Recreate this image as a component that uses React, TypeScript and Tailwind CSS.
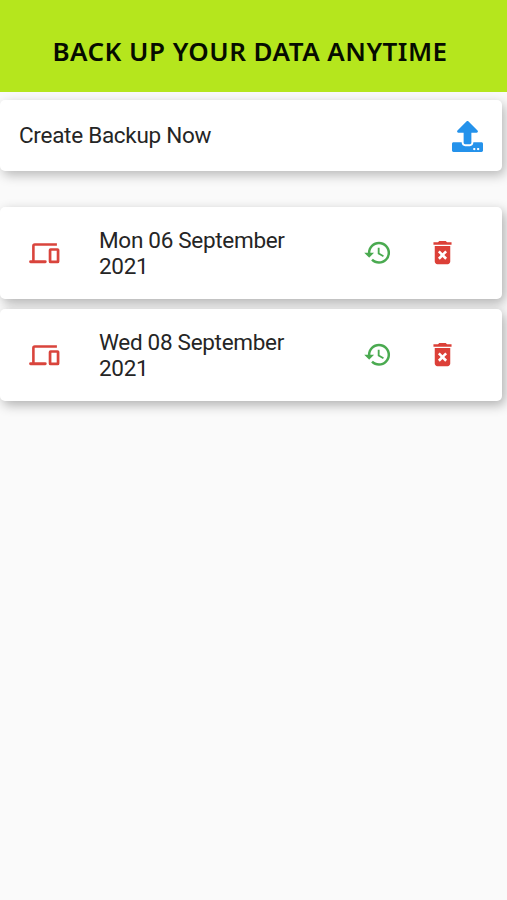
import { FaUpload } from "react-icons/fa";
import { MdDeleteForever, MdHistory } from "react-icons/md";

type Backup = {
    id: number;
    date: string;
}

const backups: Backup[] = [
    { id: 1, date: "Mon 06 September 2021" },
    { id: 2, date: "Wed 08 September 2021" },
]

function DevicesIcon() {
    return (
        <svg viewBox="0 0 24 24" className="size-[31px] text-[#d9443c]" fill="none" stroke="currentColor" strokeWidth="2" strokeLinejoin="round">
            <path d="M21.6 5H4.5Q3.4 5 3.4 6.2V18" />
            <path d="M1.2 18.4H12.6" strokeWidth="2.2" strokeLinecap="round" />
            <rect x="16.3" y="8.9" width="6.2" height="9.6" rx="0.4" strokeWidth="2.1" />
        </svg>
    )
}

function BackupCard({ backup }: { backup: Backup }) {
    return (
        <div className="flex h-[92px] w-[502px] items-center rounded-[5px] bg-white pl-[29px] shadow-[3px_4px_12px_rgba(0,0,0,0.3)]">
            <DevicesIcon />
            <p className="ml-[39px] w-[200px] pb-px text-[22.5px] leading-[26px] tracking-[-0.3px]">{backup.date}</p>
            <button aria-label="Restore backup" className="ml-16">
                <MdHistory className="size-[29.5px] text-[#4aaa50]" />
            </button>
            <button aria-label="Delete backup" className="ml-[34px] pb-px">
                <MdDeleteForever className="size-[31px] text-[#dc4038]" />
            </button>
        </div>
    )
}

export default function App() {
    return (
        <div className="min-h-[900px] bg-[#fafafa] font-['Roboto',sans-serif] text-[#252525]">
            <header className="flex h-[92px] justify-center bg-[#b5e61d] pt-[33px] pr-[7px]">
                <h1 className="font-['Noto_Sans',sans-serif] text-[26px] leading-[36px] font-semibold tracking-[0.48px] whitespace-nowrap text-[#060c00]">
                    BACK UP YOUR DATA ANYTIME
                </h1>
            </header>
            <main className="pt-2">
                <button className="flex h-[71px] w-[502px] items-center justify-between rounded-[5px] bg-white pr-[19px] pl-[19px] shadow-[3px_4px_12px_rgba(0,0,0,0.27)]">
                    <span className="text-[22.5px] tracking-[-0.28px]">Create Backup Now</span>
                    <FaUpload className="mt-px size-[31px] text-[#2492eb]" />
                </button>
                <div className="mt-9 flex flex-col gap-2.5">
                    {backups.map((backup) => (
                        <BackupCard key={backup.id} backup={backup} />
                    ))}
                </div>
            </main>
        </div>
    )
}
